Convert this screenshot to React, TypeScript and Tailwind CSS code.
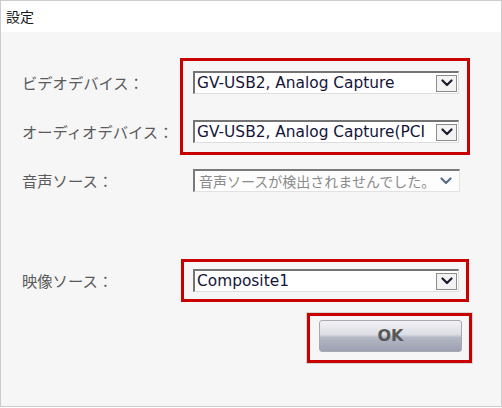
import React from "react";

const jp = { fontFamily: '"Noto Sans CJK JP", "Noto Sans", sans-serif' };
const vd = { fontFamily: '"DejaVu Sans", "Noto Sans CJK JP", sans-serif' };

function Chevron({ color = "#1c1c30" }: { color?: string }) {
  return (
    <svg width="12" height="8" viewBox="0 0 12 8">
      <path d="M1.5 1.5 L6 6 L10.5 1.5" fill="none" stroke={color} strokeWidth="2.2" strokeLinecap="round" strokeLinejoin="round" />
    </svg>
  );
}

function Select({ text }: { text: string }) {
  return (
    <div className="w-[266px] h-[23px] flex items-center bg-white border-t-2 border-l-2 border-r border-b border-t-[#747474] border-l-[#747474] border-r-[#dedede] border-b-[#dedede]">
      <div className="flex-1 min-w-0 overflow-hidden whitespace-nowrap pl-[2px] text-[15.4px] leading-[19px] text-[#15153a]" style={vd}>
        {text}
      </div>
      <div className="w-[21px] h-[17px] mr-[1px] flex items-center justify-center bg-[#f3f3f3] border border-[#8c8c8c] shrink-0">
        <Chevron />
      </div>
    </div>
  );
}

export default function App() {
  return (
    <div className="w-[502px] h-[408px] bg-white">
      <div className="w-[502px] h-[407px] border border-[#cccccc] flex flex-col">
        <div className="h-[31px] bg-white flex items-center pl-[5px] text-[14px] text-[#1a1a1a]" style={jp}>
          設定
        </div>
        <div className="flex-1 bg-[#f6f6f6] pl-[21px] flex flex-col text-[#5a5a5a]" style={jp}>
          <div className="flex mt-[26px]">
            <div className="w-[158px] flex flex-col pt-[13px] gap-[26px] text-[15.3px]">
              <div className="h-[23px] flex items-center">ビデオデバイス：</div>
              <div className="h-[23px] flex items-center">オーディオデバイス：</div>
            </div>
            <div className="w-[290px] h-[97px] border-[3px] border-[#c80000] pt-[10px] pl-[10px] flex flex-col gap-[26px]">
              <Select text="GV-USB2, Analog Capture" />
              <Select text="GV-USB2, Analog Capture(PCI" />
            </div>
          </div>
          <div className="flex items-center mt-[14px]">
            <div className="w-[171px] text-[15.3px]">音声ソース：</div>
            <div className="w-[267px] h-[23px] flex items-center bg-[#fdfdfd] border-t-2 border-l-2 border-r border-b border-t-[#7a7a7a] border-l-[#7a7a7a] border-r-[#e2e2e2] border-b-[#e2e2e2]">
              <div className="flex-1 min-w-0 whitespace-nowrap pl-[4px] text-[14px] leading-[19px] text-[#8a8a8a]" style={jp}>
                音声ソースが検出されませんでした。
              </div>
              <div className="w-[22px] flex items-center justify-center shrink-0 mr-[2px]">
                <Chevron color="#5c6e8a" />
              </div>
            </div>
          </div>
          <div className="flex items-center mt-[67px]">
            <div className="w-[159px] text-[15.3px]">映像ソース：</div>
            <div className="w-[288px] border-[3px] border-[#c80000] py-[7px] pl-[9px]">
              <Select text="Composite1" />
            </div>
          </div>
          <div className="flex justify-end mt-[11px] mr-[29px]">
            <div className="w-[165px] h-[50px] border-[3px] border-[#c80000] outline outline-1 outline-[#d6d6d6] pt-[4px] pl-[9px]">
              <button
                className="w-[143px] h-[32px] rounded-[3px] border border-[#a6a8b2] bg-[linear-gradient(to_bottom,#f2f2f6_0%,#dcdde4_45%,#b4b7c4_55%,#9ca0b2_100%)] text-[16px] font-bold text-[#585858] flex items-center justify-center"
                style={vd}
              >
                OK
              </button>
            </div>
          </div>
        </div>
      </div>
    </div>
  );
}
